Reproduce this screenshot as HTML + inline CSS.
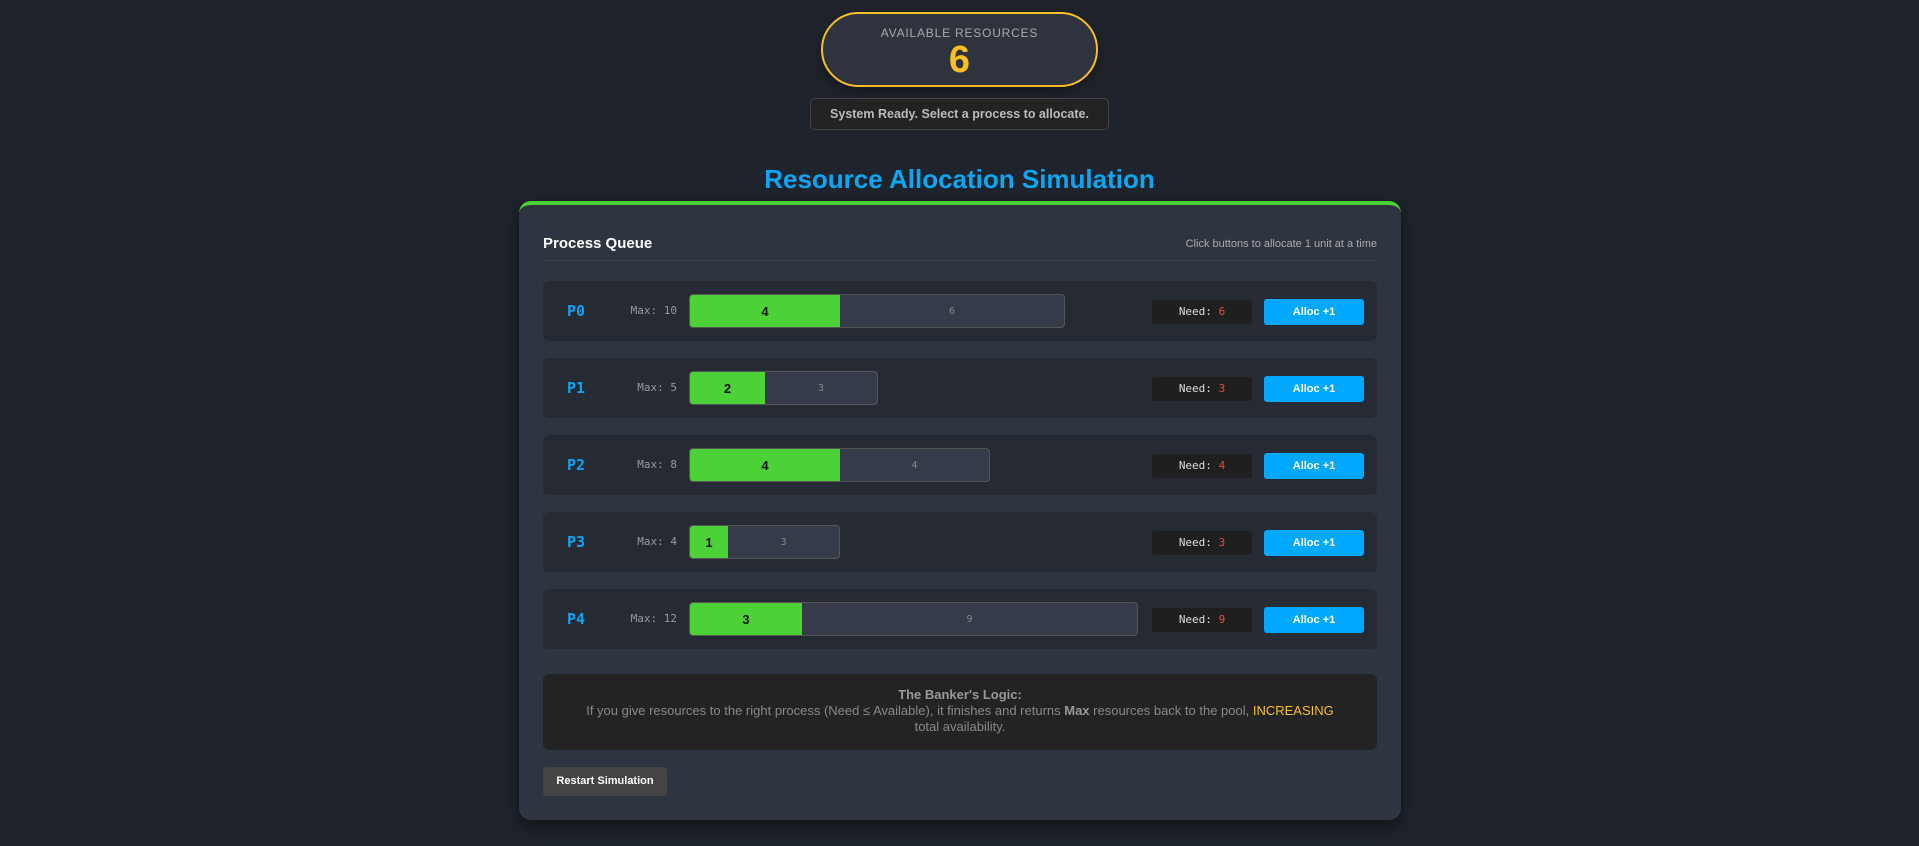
<!DOCTYPE html>
<html><head><meta charset="utf-8"><style>
*{box-sizing:border-box;margin:0;padding:0}
body{width:1919px;height:846px;background:#1f242c;font-family:"Liberation Sans",sans-serif;position:relative;overflow:hidden}
.pill{position:absolute;left:821px;top:12px;width:277px;height:75px;border:2px solid #f7bd2a;border-radius:40px;background:#2e333d;text-align:center;box-shadow:0 4px 12px rgba(0,0,0,.4)}
.pill .l{color:#a8a8a8;font-size:12px;letter-spacing:.8px;margin-top:12px}
.pill .n{color:#fbbf24;font-size:38px;font-weight:bold;line-height:40px}
.status{position:absolute;left:810px;top:98px;width:299px;height:32px;background:#232323;border:1px solid #444;border-radius:5px;color:#bbb;font-size:12.5px;font-weight:bold;text-align:center;line-height:30px}
h1{position:absolute;left:0;width:1919px;top:164px;text-align:center;color:#0ea5f5;font-size:26px;font-weight:bold}
.card{position:absolute;left:519px;top:201px;width:882px;height:619px;background:#2f3540;border-top:4px solid #4cd137;border-radius:12px;box-shadow:0 6px 16px rgba(0,0,0,.5)}
.hd{position:absolute;left:24px;top:30px;color:#fff;font-weight:bold;font-size:15px}
.hr{position:absolute;right:24px;top:33px;color:#aaa;font-size:11px}
.div{position:absolute;left:24px;right:24px;top:55px;height:1px;background:#444}
.row{position:absolute;left:24px;width:834px;height:60px;background:#262a33;border-radius:6px}
.pl{position:absolute;left:24px;top:21px;color:#0ea5f5;font:bold 15px "DejaVu Sans Mono","Liberation Mono",monospace}
.mx{position:absolute;right:700px;top:23px;color:#999;font:11px "DejaVu Sans Mono","Liberation Mono",monospace;white-space:nowrap}
.bar{position:absolute;left:146px;top:13px;height:34px;border:1px solid #555;border-radius:4px;background:#363b4a;overflow:hidden;display:flex}
.g{background:#4cd137;color:#111;font:bold 13px "Liberation Sans",sans-serif;display:flex;align-items:center;justify-content:center}
.r{flex:1;color:#888;font:10px "DejaVu Sans Mono",monospace;display:flex;align-items:center;justify-content:center}
.need{position:absolute;left:609px;top:19px;width:100px;height:24px;background:#1f1f1f;border-radius:3px;color:#ddd;font:11px "DejaVu Sans Mono",monospace;text-align:center;line-height:24px}
.need b{color:#e74c3c;font-weight:normal}
.btn{position:absolute;left:721px;top:18px;width:100px;height:26px;background:#00a8ff;border-radius:3px;color:#fff;font-weight:bold;font-size:11px;text-align:center;line-height:26px}
.logic{position:absolute;left:24px;top:469px;width:834px;height:76px;background:#232323;border-radius:6px;color:#888;font-size:13px;text-align:center;padding:13px 18px 0;line-height:16px}
.logic b{color:#999}
.rs{position:absolute;left:24px;top:562px;width:124px;height:29px;background:#444;border-radius:3px;color:#fff;font-weight:bold;font-size:11px;text-align:center;line-height:29px}
</style></head><body>
<div class="pill"><div class="l">AVAILABLE RESOURCES</div><div class="n">6</div></div>
<div class="status">System Ready. Select a process to allocate.</div>
<h1>Resource Allocation Simulation</h1>
<div class="card">
<div class="hd">Process Queue</div><div class="hr">Click buttons to allocate 1 unit at a time</div><div class="div"></div>
<div class="row" style="top:76px"><div class="pl">P0</div><div class="mx">Max: 10</div><div class="bar" style="width:376px"><div class="g" style="width:150px">4</div><div class="r">6</div></div><div class="need">Need: <b>6</b></div><div class="btn">Alloc +1</div></div>
<div class="row" style="top:153px"><div class="pl">P1</div><div class="mx">Max: 5</div><div class="bar" style="width:189px"><div class="g" style="width:75px">2</div><div class="r">3</div></div><div class="need">Need: <b>3</b></div><div class="btn">Alloc +1</div></div>
<div class="row" style="top:230px"><div class="pl">P2</div><div class="mx">Max: 8</div><div class="bar" style="width:301px"><div class="g" style="width:150px">4</div><div class="r">4</div></div><div class="need">Need: <b>4</b></div><div class="btn">Alloc +1</div></div>
<div class="row" style="top:307px"><div class="pl">P3</div><div class="mx">Max: 4</div><div class="bar" style="width:151px"><div class="g" style="width:38px">1</div><div class="r">3</div></div><div class="need">Need: <b>3</b></div><div class="btn">Alloc +1</div></div>
<div class="row" style="top:384px"><div class="pl">P4</div><div class="mx">Max: 12</div><div class="bar" style="width:449px"><div class="g" style="width:112px">3</div><div class="r">9</div></div><div class="need">Need: <b>9</b></div><div class="btn">Alloc +1</div></div>
<div class="logic"><b>The Banker's Logic:</b><br>If you give resources to the right process (Need ≤ Available), it finishes and returns <b>Max</b> resources back to the pool, <span style="color:#fbbf24">INCREASING</span> total&nbsp;availability.</div>
<div class="rs">Restart Simulation</div>
</div>
</body></html>
